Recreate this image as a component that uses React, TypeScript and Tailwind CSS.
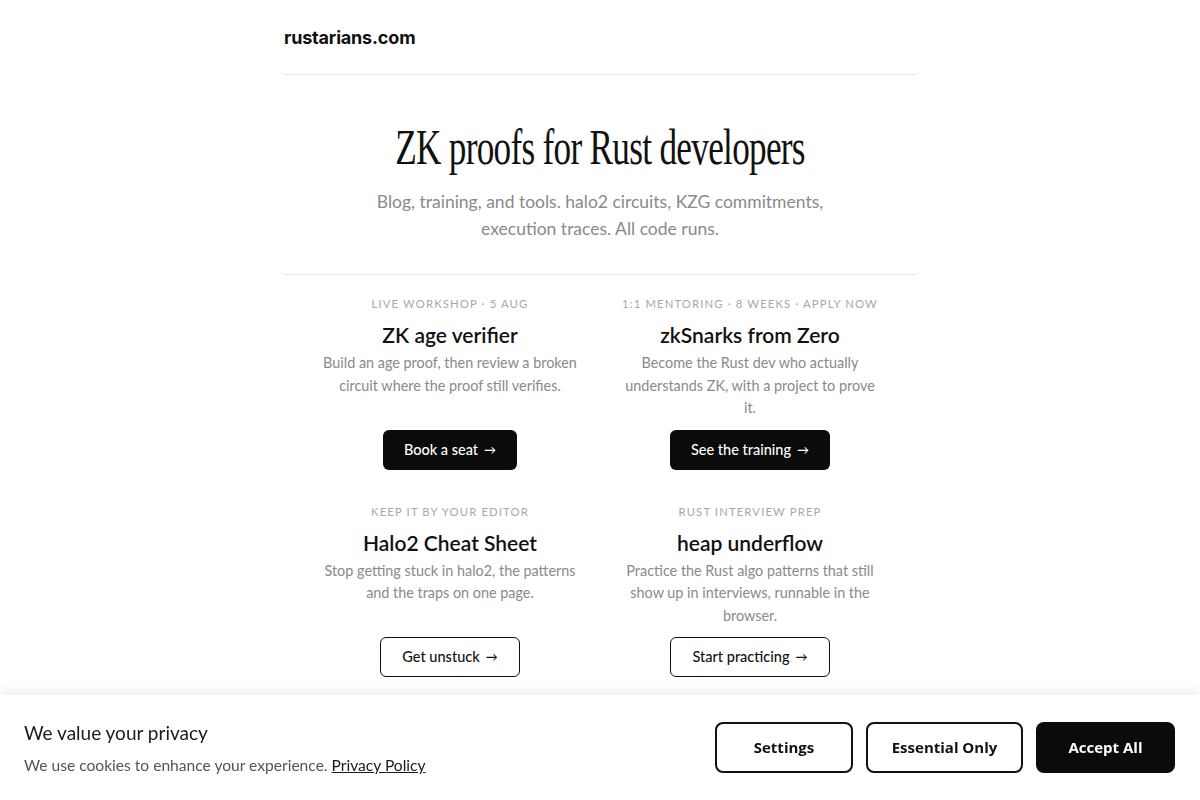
interface Offer {
  kicker: string;
  title: string;
  body: string;
  cta: string;
  solid: boolean;
}

const offers: Offer[] = [
  {
    kicker: 'Live workshop · 5 Aug',
    title: 'ZK age verifier',
    body: 'Build an age proof, then review a broken circuit where the proof still verifies.',
    cta: 'Book a seat',
    solid: true,
  },
  {
    kicker: '1:1 mentoring · 8 weeks · Apply now',
    title: 'zkSnarks from Zero',
    body: 'Become the Rust dev who actually understands ZK, with a project to prove it.',
    cta: 'See the training',
    solid: true,
  },
  {
    kicker: 'Keep it by your editor',
    title: 'Halo2 Cheat Sheet',
    body: 'Stop getting stuck in halo2, the patterns and the traps on one page.',
    cta: 'Get unstuck',
    solid: false,
  },
  {
    kicker: 'Rust interview prep',
    title: 'heap underflow',
    body: 'Practice the Rust algo patterns that still show up in interviews, runnable in the browser.',
    cta: 'Start practicing',
    solid: false,
  },
];

function OfferCard({ offer }: { offer: Offer }) {
  return (
    <div className="flex flex-col items-center text-center px-[21px]">
      <p className="text-[11.3px] leading-4 uppercase tracking-[0.1em] text-[#a8a8a8]">{offer.kicker}</p>
      <h3 className="mt-[9px] text-[21px] leading-7 font-semibold text-[#111]">{offer.title}</h3>
      <p className="mt-[3px] mb-[10px] text-[14.4px] leading-[22.5px] text-[#8a8a8a]">{offer.body}</p>
      <a
        href="#"
        className={`mt-auto inline-flex items-center gap-1.5 h-10 px-[21px] rounded-md text-[14.5px] font-medium ${
          offer.solid ? 'bg-[#0b0b0b] text-white' : 'bg-white text-[#111] border border-[#111]'
        }`}
      >
        {offer.cta}
        <span className="text-[12px]">→</span>
      </a>
    </div>
  );
}

export default function App() {
  return (
    <div className="min-h-screen bg-white text-[#111] font-['Lato',_sans-serif]">
      <div className="max-w-[632px] mx-auto">
        <header className="h-[75px] flex items-center border-b border-[#e5e5e5]">
          <a href="#" className="text-[18px] font-bold font-['Inter',_sans-serif] tracking-[-0.01em]">rustarians.com</a>
        </header>

        <section className="pt-[44px] pb-[32px] text-center border-b border-[#e5e5e5]">
          <h1 className="font-['Liberation_Serif',_serif] text-[50px] leading-[56px] text-[#111]">
            <span className="inline-block scale-x-[0.704] whitespace-nowrap tracking-[-0.02em]">ZK proofs for Rust developers</span>
          </h1>
          <p className="mt-[13px] mx-auto max-w-[470px] text-[17.5px] leading-[27px] text-[#8a8a8a]">
            Blog, training, and tools. halo2 circuits, KZG commitments, execution traces. All code runs.
          </p>
        </section>

        <section className="mx-auto w-[600px] grid grid-cols-2 gap-y-[34px] pt-[21px] pb-[40px]">
          {offers.map((o) => (
            <OfferCard key={o.title} offer={o} />
          ))}
        </section>
      </div>

      <div className="fixed inset-x-0 bottom-0 bg-white shadow-[0_-3px_10px_rgba(0,0,0,0.07)]">
        <div className="h-[105px] flex items-center justify-between pl-6 pr-[25px]">
          <div>
            <h2 className="text-[19px] leading-[26px] text-[#1a1a1a]">We value your privacy</h2>
            <p className="mt-[9px] text-[15.6px] leading-5 text-[#555]">
              We use cookies to enhance your experience.{' '}
              <a href="#" className="underline text-[#1a1a1a]">Privacy Policy</a>
            </p>
          </div>
          <div className="flex gap-[13px] font-['Open_Sans',_sans-serif] text-[15px] font-bold">
            <button className="w-[138px] h-[51px] rounded-lg border-2 border-[#111] bg-white text-[#111]">Settings</button>
            <button className="w-[157px] h-[51px] rounded-lg border-2 border-[#111] bg-white text-[#111]">Essential Only</button>
            <button className="w-[139px] h-[51px] rounded-lg bg-[#0b0b0b] text-white">Accept All</button>
          </div>
        </div>
      </div>
    </div>
  );
}
